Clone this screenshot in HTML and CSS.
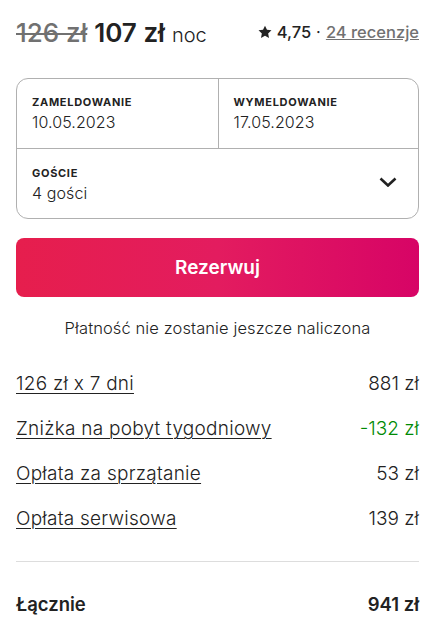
FILE: index.html
```html
<!DOCTYPE html>
<html lang="pl">
<head>
<meta charset="utf-8">
<link rel="stylesheet" href="styles.css">
</head>
<body>
<div class="card">
  <div class="head">
    <div class="price">
      <span class="old">126 zł</span>
      <span class="now">107 zł</span>
      <span class="per">noc</span>
    </div>
    <div class="rating">
      <svg class="star" viewBox="0 0 32 32" width="14" height="14"><path d="M16 1.5l4.5 9.4 10.3 1.3-7.6 7.2 2 10.3L16 24.7l-9.2 5 2-10.3-7.6-7.2 10.3-1.3z" fill="#222"/></svg>
      <span class="score">4,75</span>
      <span class="dot">·</span>
      <a class="reviews">24 recenzje</a>
    </div>
  </div>

  <div class="picker">
    <div class="dates">
      <div class="cell">
        <div class="label">ZAMELDOWANIE</div>
        <div class="value">10.05.2023</div>
      </div>
      <div class="cell right">
        <div class="label">WYMELDOWANIE</div>
        <div class="value">17.05.2023</div>
      </div>
    </div>
    <div class="guests">
      <div>
        <div class="label">GOŚCIE</div>
        <div class="value">4 gości</div>
      </div>
      <svg class="chev" viewBox="0 0 18 10" width="18" height="10"><path d="M1.5 1.5L9 8.5l7.5-7" fill="none" stroke="#222" stroke-width="2.6"/></svg>
    </div>
  </div>

  <button class="reserve">Rezerwuj</button>
  <p class="note">Płatność nie zostanie jeszcze naliczona</p>

  <div class="rows">
    <div class="row"><a>126 zł x 7 dni</a><span>881 zł</span></div>
    <div class="row"><a>Zniżka na pobyt tygodniowy</a><span class="green">-132 zł</span></div>
    <div class="row"><a>Opłata za sprzątanie</a><span>53 zł</span></div>
    <div class="row"><a>Opłata serwisowa</a><span>139 zł</span></div>
  </div>

  <div class="total"><span>Łącznie</span><span>941 zł</span></div>
</div>
</body>
</html>
```

FILE: styles.css
```css
* { box-sizing: border-box; }
body {
  margin: 0;
  font-family: Inter, "Noto Sans", sans-serif;
  color: #222;
  background: #fff;
}
.card {
  padding: 0 21px 0 16px;
}
.head {
  display: flex;
  justify-content: space-between;
  align-items: center;
  height: 78px;
  padding-bottom: 14px;
}
.price { display: flex; align-items: baseline; gap: 7px; white-space: nowrap; }
.old {
  font-size: 26px;
  color: #717171;
  text-decoration: line-through;
  text-decoration-thickness: 2px;
  font-weight: 500;
}
.now { font-size: 26px; font-weight: 600; }
.per { font-size: 20px; font-weight: 300; color: #222; }
.rating { display: flex; align-items: center; gap: 5px; font-size: 16.5px; white-space: nowrap; }
.star { width: 14px; height: 14px; }
.score { font-weight: 500; }
.dot { color: #222; }
.reviews { color: #717171; text-decoration: underline; font-weight: 500; }
.picker {
  border: 1px solid #b0b0b0;
  border-radius: 12px;
}
.dates {
  display: grid;
  grid-template-columns: 1fr 1fr;
  border-bottom: 1px solid #b0b0b0;
  height: 70px;
}
.cell { padding: 16px 12px 0 15px; }
.cell.right { border-left: 1px solid #b0b0b0; }
.label { font-size: 11px; font-weight: 700; letter-spacing: 0.7px; line-height: 14px; }
.value { font-size: 16px; font-weight: 300; color: #222; line-height: 20px; margin-top: 3px; letter-spacing: 0.1px; }
.guests {
  display: flex;
  justify-content: space-between;
  align-items: center;
  height: 69px;
  padding: 0 21px 0 15px;
}
.guests > div { padding-top: 1px; }
.chev { margin-top: -3px; }
.reserve {
  display: block;
  width: 100%;
  height: 59px;
  margin-top: 19px;
  border: 0;
  border-radius: 8px;
  background: linear-gradient(to right, #e61e4d 0%, #e31c5f 50%, #d70466 100%);
  color: #fff;
  font-family: inherit;
  font-size: 19px;
  font-weight: 600;
}
.note {
  margin: 20px 0 0;
  text-align: center;
  font-size: 16.5px;
  font-weight: 300;
  line-height: 22px;
  letter-spacing: 0.1px;
}
.rows { margin-top: 22px; }
.row {
  display: flex;
  justify-content: space-between;
  align-items: center;
  height: 45px;
  font-size: 19px;
  font-weight: 300;
  white-space: nowrap;
}
.row a { text-decoration: underline; text-decoration-thickness: 1px; text-underline-offset: 3px; color: #222; letter-spacing: 0.25px; }
.green { color: #008a05; }
.total {
  display: flex;
  justify-content: space-between;
  align-items: center;
  margin-top: 20px;
  border-top: 1px solid #ddd;
  height: 84px;
  font-size: 18.5px;
  font-weight: 600;
}
```
